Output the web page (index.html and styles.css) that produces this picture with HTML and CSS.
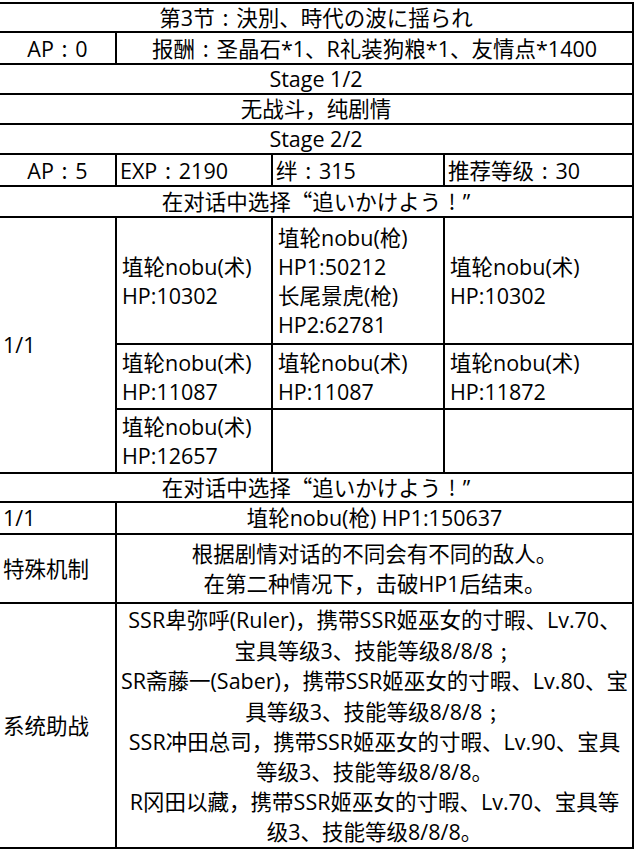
FILE: index.html
```html
<!DOCTYPE html>
<html lang="zh-CN">
<head>
<meta charset="utf-8">
<title>第3节</title>
<link rel="stylesheet" href="styles.css">
</head>
<body>
<table class="t">
  <colgroup>
    <col class="w0"><col class="w1"><col class="w2"><col class="w3">
  </colgroup>
  <tr class="r29"><td colspan="4" class="c0 ctr">第3节<span class="p">:</span>決別、時代の波に揺られ</td></tr>
  <tr class="r32"><td class="c0 ctr">AP<span class="p">:</span>0</td><td colspan="3" class="ctr">报酬<span class="p">:</span>圣晶石*1、R礼装狗粮*1、友情点*1400</td></tr>
  <tr class="r30"><td colspan="4" class="c0 ctr">Stage 1/2</td></tr>
  <tr class="r30"><td colspan="4" class="c0 ctr">无战斗，纯剧情</td></tr>
  <tr class="r30"><td colspan="4" class="c0 ctr">Stage 2/2</td></tr>
  <tr class="r32"><td class="c0 ctr">AP<span class="p">:</span>5</td><td>EXP<span class="p">:</span>2190</td><td>绊<span class="p">:</span>315</td><td>推荐等级<span class="p">:</span>30</td></tr>
  <tr class="r31"><td colspan="4" class="c0 ctr">在对话中选择<span class="lq">“</span>追いかけよう<span class="p">!</span><span class="q">”</span></td></tr>
  <tr class="r127">
    <td rowspan="3" class="c0">1/1</td>
    <td class="en">埴轮nobu(术)<br>HP:10302</td>
    <td class="en">埴轮nobu(枪)<br>HP1:50212<br>长尾景虎(枪)<br>HP2:62781</td>
    <td class="en">埴轮nobu(术)<br>HP:10302</td>
  </tr>
  <tr class="r65">
    <td class="en">埴轮nobu(术)<br>HP:11087</td>
    <td class="en">埴轮nobu(术)<br>HP:11087</td>
    <td class="en">埴轮nobu(术)<br>HP:11872</td>
  </tr>
  <tr class="r64">
    <td class="en">埴轮nobu(术)<br>HP:12657</td>
    <td class="en"></td>
    <td class="en"></td>
  </tr>
  <tr class="r29"><td colspan="4" class="c0 ctr">在对话中选择<span class="lq">“</span>追いかけよう<span class="p">!</span><span class="q">”</span></td></tr>
  <tr class="r32"><td class="c0">1/1</td><td colspan="3" class="ctr">埴轮nobu(枪) HP1:150637</td></tr>
  <tr class="r69"><td class="c0">特殊机制</td><td colspan="3" class="ctr ml">根据剧情对话的不同会有不同的敌人。<br>在第二种情况下，击破HP1后结束。</td></tr>
  <tr class="r245"><td class="c0">系统助战</td><td colspan="3" class="ctr ml">SSR卑弥呼(Ruler)，携带SSR姬巫女的寸暇、Lv.70、<br>宝具等级3、技能等级8/8/8<span class="p">;</span><br>SR斋藤一(Saber)，携带SSR姬巫女的寸暇、Lv.80、宝<br>具等级3、技能等级8/8/8<span class="p">;</span><br>SSR冲田总司，携带SSR姬巫女的寸暇、Lv.90、宝具<br>等级3、技能等级8/8/8。<br>R冈田以藏，携带SSR姬巫女的寸暇、Lv.70、宝具等<br>级3、技能等级8/8/8。</td></tr>
</table>
</body>
</html>
```

FILE: styles.css
```css
html, body {
  margin: 0;
  background: #fff;
}
body {
  padding-top: 2px;
  font-family: "Open Sans", "Noto Sans CJK SC", sans-serif;
  font-size: 21.5px;
  color: #000;
}
.t {
  border-collapse: collapse;
  table-layout: fixed;
  width: 633px;
}
.w0 { width: 116px; }
.w1 { width: 156px; }
.w2 { width: 172px; }
.w3 { width: 189px; }
.t td {
  border: 2px solid #000;
  padding: 0 3px;
  line-height: 26px;
  white-space: nowrap;
  vertical-align: middle;
  text-align: left;
}
.t td.c0 { border-left: none; padding-left: 3px; }
.t td.ctr { text-align: center; }
.t td.en { line-height: 29px; padding-left: 5px; }
.t td.ml { line-height: 30px; }
.p {
  display: inline-block;
  width: 1em;
  text-align: center;
  font-family: "Noto Sans CJK SC", sans-serif;
}
.lq {
  display: inline-block;
  width: 1em;
  text-align: right;
  font-family: "Noto Sans CJK SC", sans-serif;
}
.q { font-family: "Open Sans", sans-serif; }
.r29 { height: 29px; }
.r30 { height: 30px; }
.r31 { height: 31px; }
.r32 { height: 32px; }
.r64 { height: 64px; }
.r65 { height: 65px; }
.r69 { height: 69px; }
.r127 { height: 127px; }
.r245 { height: 245px; }
```
